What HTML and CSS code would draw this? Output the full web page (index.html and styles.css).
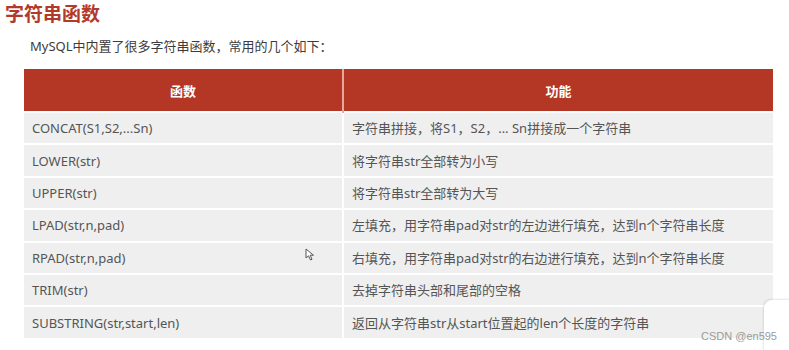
FILE: index.html
```html
<!DOCTYPE html>
<html lang="zh">
<head>
<meta charset="utf-8">
<link rel="stylesheet" href="styles.css">
</head>
<body>
<div class="page">
  <h1 class="title">字符串函数</h1>
  <p class="intro">MySQL中内置了很多字符串函数，常用的几个如下：</p>
  <table class="fn-table">
    <thead>
      <tr><th class="col-fn">函数</th><th class="col-desc">功能</th></tr>
    </thead>
    <tbody>
      <tr><td>CONCAT(S1,S2,...Sn)</td><td>字符串拼接，将S1，S2，... Sn拼接成一个字符串</td></tr>
      <tr><td>LOWER(str)</td><td>将字符串str全部转为小写</td></tr>
      <tr><td>UPPER(str)</td><td>将字符串str全部转为大写</td></tr>
      <tr><td>LPAD(str,n,pad)</td><td>左填充，用字符串pad对str的左边进行填充，达到n个字符串长度</td></tr>
      <tr><td>RPAD(str,n,pad)</td><td>右填充，用字符串pad对str的右边进行填充，达到n个字符串长度</td></tr>
      <tr><td>TRIM(str)</td><td>去掉字符串头部和尾部的空格</td></tr>
      <tr><td>SUBSTRING(str,start,len)</td><td>返回从字符串str从start位置起的len个长度的字符串</td></tr>
    </tbody>
  </table>
</div>
<svg class="cursor" width="10" height="13" viewBox="0 0 10 13"><path d="M1 1 L1 10 L3.5 7.8 L5.5 12 L7 11.3 L5.2 7.2 L8.5 7.2 Z" fill="#fff" stroke="#555" stroke-width="1"/></svg>
<div class="corner-panel"></div>
<div class="watermark">CSDN @en595</div>
</body>
</html>
```
FILE: styles.css
```css
html, body {
  margin: 0;
  padding: 0;
  background: #fff;
}
body {
  width: 789px;
  height: 350px;
  overflow: hidden;
  position: relative;
  font-family: "Noto Sans", "Noto Sans CJK SC", sans-serif;
}
.page {
  padding-top: 1px;
}
.title {
  margin: 0 0 0 5px;
  font-family: "Noto Sans CJK SC", sans-serif;
  font-size: 19px;
  font-weight: 700;
  line-height: 24px;
  color: #b23a2b;
}
.intro {
  margin: 11px 0 0 30px;
  font-size: 13px;
  line-height: 20px;
  color: #3c3c3c;
}
.fn-table {
  margin: 13px 0 0 24px;
  width: 749px;
  border-collapse: collapse;
  table-layout: fixed;
  font-size: 13px;
  color: #555;
}
.col-fn { width: 318px; }
.fn-table th {
  height: 42px;
  padding: 0;
  background: #b43624;
  color: #fff;
  font-family: "Noto Sans CJK SC", sans-serif;
  font-weight: 700;
  font-size: 13px;
  border-left: 2px solid #e7a79c;
}
.fn-table th:first-child { border-left: none; }
.fn-table td {
  height: 30.4px;
  padding: 0 0 0 8px;
  background: #efefef;
  border-top: 2px solid #fff;
  border-left: 2px solid #fff;
  line-height: 18px;
}
.fn-table td:first-child { border-left: none; }
.cursor {
  position: absolute;
  left: 305px;
  top: 248px;
}
.corner-panel {
  position: absolute;
  left: 764px;
  top: 300px;
  width: 40px;
  height: 60px;
  background: #fff;
  border-radius: 8px 0 0 0;
  box-shadow: -1px -1px 2px rgba(0,0,0,0.1);
}
.watermark {
  position: absolute;
  left: 701px;
  top: 330px;
  font-family: "Liberation Sans", sans-serif;
  font-size: 11px;
  color: #9a9a9a;
}
```
